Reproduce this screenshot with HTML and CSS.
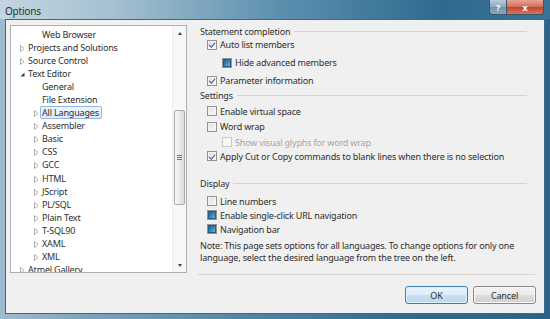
FILE: index.html
```html
<!DOCTYPE html>
<html lang="en">
<head>
  <meta charset="UTF-8">
  <title>Options</title>
  <link rel="stylesheet" href="styles.css">
</head>
<body>

<div class="window">
  <div class="titlebar">
    <span class="title">Options</span>
    <div class="caption-buttons">
      <span class="cap-btn help">?</span>
      <span class="cap-btn close">x</span>
    </div>
  </div>

  <div class="client">
    <div class="main">

      <!-- arvore de categorias -->
      <div class="tree">
        <ul class="tree-list">
          <li class="node l2"><span class="arrow"></span>Web Browser</li>
          <li class="node l1"><span class="arrow"><svg width="5" height="7" viewBox="0 0 5 7"><polygon points="0.5,0.5 4,3.5 0.5,6.5" fill="#fff" stroke="#adadad"/></svg></span>Projects and Solutions</li>
          <li class="node l1"><span class="arrow"><svg width="5" height="7" viewBox="0 0 5 7"><polygon points="0.5,0.5 4,3.5 0.5,6.5" fill="#fff" stroke="#adadad"/></svg></span>Source Control</li>
          <li class="node l1"><span class="arrow"><svg width="5" height="7" viewBox="0 0 5 7"><polygon points="4.5,1.5 4.5,5.5 0.5,5.5" fill="#3a3a3a"/></svg></span>Text Editor</li>
          <li class="node l2"><span class="arrow"></span>General</li>
          <li class="node l2"><span class="arrow"></span>File Extension</li>
          <li class="node l2"><span class="arrow"><svg width="5" height="7" viewBox="0 0 5 7"><polygon points="0.5,0.5 4,3.5 0.5,6.5" fill="#fff" stroke="#adadad"/></svg></span><span class="selected">All Languages</span></li>
          <li class="node l2"><span class="arrow"><svg width="5" height="7" viewBox="0 0 5 7"><polygon points="0.5,0.5 4,3.5 0.5,6.5" fill="#fff" stroke="#adadad"/></svg></span>Assembler</li>
          <li class="node l2"><span class="arrow"><svg width="5" height="7" viewBox="0 0 5 7"><polygon points="0.5,0.5 4,3.5 0.5,6.5" fill="#fff" stroke="#adadad"/></svg></span>Basic</li>
          <li class="node l2"><span class="arrow"><svg width="5" height="7" viewBox="0 0 5 7"><polygon points="0.5,0.5 4,3.5 0.5,6.5" fill="#fff" stroke="#adadad"/></svg></span>CSS</li>
          <li class="node l2"><span class="arrow"><svg width="5" height="7" viewBox="0 0 5 7"><polygon points="0.5,0.5 4,3.5 0.5,6.5" fill="#fff" stroke="#adadad"/></svg></span>GCC</li>
          <li class="node l2"><span class="arrow"><svg width="5" height="7" viewBox="0 0 5 7"><polygon points="0.5,0.5 4,3.5 0.5,6.5" fill="#fff" stroke="#adadad"/></svg></span>HTML</li>
          <li class="node l2"><span class="arrow"><svg width="5" height="7" viewBox="0 0 5 7"><polygon points="0.5,0.5 4,3.5 0.5,6.5" fill="#fff" stroke="#adadad"/></svg></span>JScript</li>
          <li class="node l2"><span class="arrow"><svg width="5" height="7" viewBox="0 0 5 7"><polygon points="0.5,0.5 4,3.5 0.5,6.5" fill="#fff" stroke="#adadad"/></svg></span>PL/SQL</li>
          <li class="node l2"><span class="arrow"><svg width="5" height="7" viewBox="0 0 5 7"><polygon points="0.5,0.5 4,3.5 0.5,6.5" fill="#fff" stroke="#adadad"/></svg></span>Plain Text</li>
          <li class="node l2"><span class="arrow"><svg width="5" height="7" viewBox="0 0 5 7"><polygon points="0.5,0.5 4,3.5 0.5,6.5" fill="#fff" stroke="#adadad"/></svg></span>T-SQL90</li>
          <li class="node l2"><span class="arrow"><svg width="5" height="7" viewBox="0 0 5 7"><polygon points="0.5,0.5 4,3.5 0.5,6.5" fill="#fff" stroke="#adadad"/></svg></span>XAML</li>
          <li class="node l2"><span class="arrow"><svg width="5" height="7" viewBox="0 0 5 7"><polygon points="0.5,0.5 4,3.5 0.5,6.5" fill="#fff" stroke="#adadad"/></svg></span>XML</li>
          <li class="node l1"><span class="arrow"><svg width="5" height="7" viewBox="0 0 5 7"><polygon points="0.5,0.5 4,3.5 0.5,6.5" fill="#fff" stroke="#adadad"/></svg></span>Atmel Gallery</li>
        </ul>

        <div class="vscroll">
          <span class="sb-arrow up"></span>
          <div class="sb-track">
            <div class="sb-thumb"><span class="grip"></span></div>
          </div>
          <span class="sb-arrow down"></span>
        </div>
      </div>

      <!-- opcoes -->
      <div class="panel">
        <div class="options">
          <div class="legend">Statement completion</div>
          <div class="opt first"><span class="cb checked"></span>Auto list members</div>
          <div class="opt sub spaced"><span class="cb mixed"></span>Hide advanced members</div>
          <div class="opt spaced"><span class="cb checked"></span>Parameter information</div>

          <div class="legend settings">Settings</div>
          <div class="opt"><span class="cb"></span>Enable virtual space</div>
          <div class="opt"><span class="cb"></span>Word wrap</div>
          <div class="opt sub disabled"><span class="cb"></span>Show visual glyphs for word wrap</div>
          <div class="opt near"><span class="cb checked"></span>Apply Cut or Copy commands to blank lines when there is no selection</div>

          <div class="legend display">Display</div>
          <div class="opt wide"><span class="cb"></span>Line numbers</div>
          <div class="opt near"><span class="cb mixed"></span>Enable single-click URL navigation</div>
          <div class="opt near"><span class="cb mixed"></span>Navigation bar</div>

          <p class="note">Note: This page sets options for all languages. To change options for only one language, select the desired language from the tree on the left.</p>
        </div>
      </div>
    </div>

    <div class="footer">
      <button class="btn default">OK</button>
      <button class="btn">Cancel</button>
    </div>
  </div>
</div>

</body>
</html>
```

FILE: styles.css
```css
* {
  box-sizing: border-box;
  margin: 0;
  padding: 0;
}

body {
  background: #2f6a8c;
  font-family: 'Noto Sans', 'DejaVu Sans', sans-serif;
  font-size: 9px;
  letter-spacing: -0.18px;
  color: #2e2e2e;
}

.window {
  width: 550px;
  height: 319px;
  display: flex;
  flex-direction: column;
  background: linear-gradient(90deg, #9fbccf 0%, #7da4bd 15%, #4f86a6 45%, #2f6a8d 75%, #2a6387 100%);
}

.titlebar {
  height: 19px;
  display: flex;
  align-items: flex-start;
  justify-content: space-between;
  background: linear-gradient(90deg, #c3d5e0 0%, #a6c1d2 20%, #5e91b0 50%, #2f6a8d 80%, #3a7496 100%);
}

.title {
  margin: 4px 0 0 5px;
  font-size: 10px;
  letter-spacing: -0.2px;
  color: #25323b;
}

.caption-buttons {
  display: flex;
  margin-right: 6px;
  border: 1px solid #3a5569;
  border-top: none;
  border-radius: 0 0 4px 4px;
  overflow: hidden;
}

.cap-btn {
  height: 14px;
  display: flex;
  align-items: center;
  justify-content: center;
  color: #fff;
  font-size: 9px;
  font-weight: bold;
}

.help {
  width: 17px;
  background: linear-gradient(#b7cbd8, #8ca9bd 50%, #6f93ab 51%, #87abc2);
  border-right: 1px solid #3a5569;
}

.close {
  width: 36px;
  background: linear-gradient(#e7a495, #d36c59 50%, #c0432e 51%, #d7765b);
}

.client {
  flex: 1;
  margin: 0 5px 5px;
  background: #f0f0f0;
  border: 1px solid #3f6a86;
  display: flex;
  flex-direction: column;
  padding: 5px 8px 0 4px;
}

.main {
  display: flex;
  align-items: flex-start;
  gap: 11px;
}

/* arvore */
.tree {
  width: 177px;
  height: 248px;
  background: #fff;
  border: 1px solid #a9b0b8;
  display: flex;
  overflow: hidden;
}

.tree-list {
  flex: 1;
  list-style: none;
  padding-top: 1.5px;
}

.node {
  height: 13.1px;
  display: flex;
  align-items: center;
  white-space: nowrap;
}

.l1 { padding-left: 9px; }
.l2 { padding-left: 23px; }

.arrow {
  width: 8px;
  height: 13px;
  display: flex;
  align-items: center;
  padding-top: 2px;
}

.selected {
  margin-left: -2px;
  padding: 0 2px 0 1px;
  line-height: 11px;
  background: linear-gradient(#edf5fd, #dcebfb);
  border: 1px solid #93b6e2;
  border-radius: 2px;
}

.vscroll {
  width: 14px;
  display: flex;
  flex-direction: column;
  align-items: center;
  background: #f7f7f7;
  border-left: 1px solid #ececec;
}

.sb-arrow {
  height: 14px;
  display: flex;
  align-items: center;
}

.sb-arrow::before {
  content: '';
  border-left: 2.5px solid transparent;
  border-right: 2.5px solid transparent;
}

.up::before { border-bottom: 3px solid #444; }
.down::before { border-top: 3px solid #444; }

.sb-track {
  flex: 1;
  width: 100%;
  padding: 70px 1px 0 1px;
}

.sb-thumb {
  height: 95px;
  border: 1px solid #ababab;
  border-radius: 2px;
  background: linear-gradient(90deg, #f6f6f6, #e9e9e9 50%, #dadada);
  display: flex;
  align-items: center;
  justify-content: center;
}

.grip {
  width: 5px;
  height: 5px;
  border-top: 1px solid #777;
  border-bottom: 1px solid #777;
  position: relative;
}

.grip::after {
  content: '';
  position: absolute;
  left: 0;
  right: 0;
  top: 1px;
  border-top: 1px solid #777;
}

/* painel da direita */
.panel {
  width: 337px;
  height: 250px;
  border-bottom: 1px solid #d5d5d5;
}

.options {
  padding-left: 2px;
  padding-right: 8px;
}

.legend {
  height: 13px;
  display: flex;
  align-items: center;
  gap: 4px;
  white-space: nowrap;
}

.legend::after {
  content: '';
  flex: 1;
  border-top: 1px solid #d3d3d3;
}

.legend.settings { margin-top: 2px; }
.legend.display { margin-top: 14px; }

.opt {
  height: 13px;
  display: flex;
  align-items: center;
  gap: 3px;
  padding-left: 7px;
  margin-top: 2.5px;
  white-space: nowrap;
}

.opt.first { margin-top: 0; }
.opt.spaced { margin-top: 5px; }
.opt.near { margin-top: 1px; }
.opt.wide { margin-top: 5px; }
.opt.sub { padding-left: 22px; }
.opt.disabled { color: #a6a6a6; }

.cb {
  width: 10px;
  height: 10px;
  flex: none;
  border: 1px solid #939393;
  background: linear-gradient(135deg, #dedede, #fbfbfb);
  box-shadow: inset 0 0 0 1px #f4f4f4;
  display: flex;
  align-items: center;
  justify-content: center;
}

.disabled .cb {
  border-color: #c8c8c8;
  background: #f7f7f7;
  box-shadow: none;
}

.cb.checked::after {
  content: '';
  width: 2.5px;
  height: 5px;
  margin-top: -1px;
  border-right: 1.5px solid #42558e;
  border-bottom: 1.5px solid #42558e;
  transform: rotate(40deg);
}

.cb.mixed::after {
  content: '';
  width: 6px;
  height: 6px;
  background: linear-gradient(135deg, #1d5f8f, #3f8fc0 60%, #70b4d8);
  border: 1px solid #2a5a7e;
}

.note {
  margin-top: 4px;
  line-height: 12px;
  padding-right: 2px;
}

/* botoes */
.footer {
  display: flex;
  justify-content: flex-end;
  gap: 5px;
  margin-top: 11px;
}

.btn {
  width: 63px;
  height: 18px;
  font-family: inherit;
  font-size: 9px;
  letter-spacing: -0.15px;
  color: #2e2e2e;
  border: 1px solid #8a8a8a;
  border-radius: 3px;
  background: linear-gradient(#f3f3f3, #ebebeb 50%, #dddddd 51%, #cfcfcf);
  box-shadow: inset 0 0 0 1px #fafafa;
}

.btn.default {
  border-color: #3c7fb1;
  background: linear-gradient(#eaf4fb, #dcecf8 50%, #c6e1f4 51%, #b8d8ef);
  box-shadow: inset 0 0 0 1px #dff1fd;
}
```
